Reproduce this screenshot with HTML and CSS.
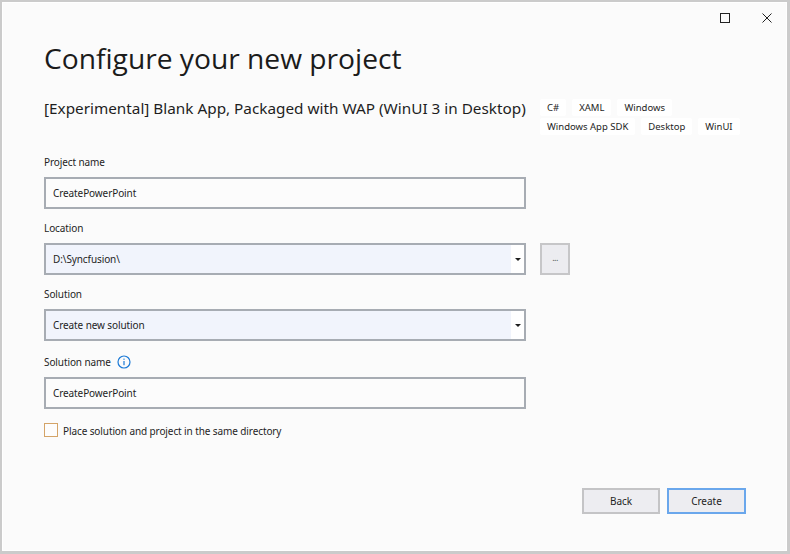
FILE: index.html
```html
<!DOCTYPE html>
<html>
<head>
<meta charset="utf-8">
<link rel="stylesheet" href="styles.css">
</head>
<body>
<div class="window">
  <div class="titlebar">
    <span class="tb-btn"><span class="max-icon"></span></span>
    <span class="tb-btn">
      <svg width="10" height="10" viewBox="0 0 10 10"><path d="M0.5 0.5 L9.5 9.5 M9.5 0.5 L0.5 9.5" stroke="#222" stroke-width="1" fill="none"/></svg>
    </span>
  </div>
  <div class="content">
    <h1 class="title">Configure your new project</h1>
    <div class="template-row">
      <div class="template-name">[Experimental] Blank App, Packaged with WAP (WinUI 3 in Desktop)</div>
      <div class="tags">
        <span class="tag">C#</span>
        <span class="tag">XAML</span>
        <span class="tag">Windows</span>
        <span class="tag">Windows App SDK</span>
        <span class="tag">Desktop</span>
        <span class="tag">WinUI</span>
      </div>
    </div>

    <div class="label first">Project name</div>
    <div class="textbox">CreatePowerPoint</div>

    <div class="label">Location</div>
    <div class="combo-row">
      <div class="combo">
        <span class="combo-text">D:\Syncfusion\</span>
        <span class="combo-arrow"><span class="arrow"></span></span>
      </div>
      <div class="browse">...</div>
    </div>

    <div class="label">Solution</div>
    <div class="combo">
      <span class="combo-text">Create new solution</span>
      <span class="combo-arrow"><span class="arrow"></span></span>
    </div>

    <div class="label with-info">Solution name
      <svg class="info" width="14" height="14" viewBox="0 0 14 14"><circle cx="7" cy="7" r="6" stroke="#1c7ad6" stroke-width="1.2" fill="none"/><rect x="6.4" y="6" width="1.2" height="4.2" fill="#1c7ad6"/><rect x="6.4" y="3.6" width="1.2" height="1.2" fill="#1c7ad6"/></svg>
    </div>
    <div class="textbox">CreatePowerPoint</div>

    <label class="check-row">
      <span class="checkbox"></span>
      <span class="check-label">Place solution and project in the same directory</span>
    </label>
  </div>
  <div class="footer">
    <div class="btn">Back</div>
    <div class="btn primary">Create</div>
  </div>
</div>
</body>
</html>
```
FILE: styles.css
```css
html, body {
  margin: 0;
  padding: 0;
}
body {
  background: #cbcbcb;
  width: 790px;
  height: 554px;
  overflow: hidden;
  font-family: "Noto Sans", "Open Sans", sans-serif;
  color: #1e1e1e;
}
.window {
  margin: 2px 3px 3px 2px;
  width: 783px;
  height: 547px;
  border: 1px solid #ffffff;
  background: #fbfbfb;
  display: flex;
  flex-direction: column;
  box-sizing: content-box;
}
.titlebar {
  display: flex;
  justify-content: flex-end;
  height: 32px;
  padding-right: 14px;
  gap: 32px;
  align-items: flex-start;
  padding-top: 10px;
  box-sizing: border-box;
}
.tb-btn {
  width: 10px;
  height: 10px;
  display: flex;
  align-items: center;
  justify-content: center;
}
.max-icon {
  width: 8px;
  height: 8px;
  border: 1px solid #222;
}
.content {
  padding-left: 41px;
  flex: 1;
}
.title {
  font-family: "Open Sans", "Noto Sans", sans-serif;
  font-weight: 400;
  font-size: 28.2px;
  line-height: 40px;
  margin: 3px 0 0 0;
  color: #1b1b1b;
}
.template-row {
  display: flex;
  align-items: flex-start;
  margin-top: 21px;
  gap: 14px;
}
.template-name {
  font-size: 15.3px;
  line-height: 22px;
  margin-top: -2px;
  width: 482px;
  white-space: nowrap;
}
.tags {
  display: flex;
  flex-wrap: wrap;
  width: 212px;
  gap: 2px 6px;
}
.tag {
  background: #ffffff;
  font-size: 9.5px;
  line-height: 17px;
  height: 17px;
  padding: 0 7px;
  border-radius: 2px;
  color: #1e1e1e;
}
.label {
  font-size: 10px;
  letter-spacing: -0.1px;
  line-height: 16px;
  margin-top: 11px;
  margin-bottom: 7px;
  display: flex;
  align-items: center;
}
.label.first {
  margin-top: 19px;
}
.label.with-info {
  margin-top: 13px;
}
.with-info .info {
  margin-left: 6px;
}
.textbox {
  width: 482px;
  height: 32px;
  box-sizing: border-box;
  border: 2px solid #a7acb3;
  background: #fcfcfc;
  font-size: 10px;
  letter-spacing: -0.1px;
  line-height: 28px;
  padding-left: 7px;
}
.combo-row {
  display: flex;
  gap: 14px;
}
.combo {
  width: 482px;
  height: 32px;
  box-sizing: border-box;
  border: 2px solid #a7acb3;
  background: #f1f4fc;
  display: flex;
  font-size: 10px;
  letter-spacing: -0.1px;
}
.combo-text {
  flex: 1;
  line-height: 28px;
  padding-left: 7px;
}
.combo-arrow {
  width: 13px;
  background: #ffffff;
  display: flex;
  align-items: center;
  justify-content: center;
}
.arrow {
  width: 0;
  height: 0;
  border-left: 3px solid transparent;
  border-right: 3px solid transparent;
  border-top: 3px solid #1e1e1e;
}
.browse {
  width: 30px;
  height: 32px;
  box-sizing: border-box;
  border: 2px solid #c6c6c8;
  background: #ececf0;
  font-size: 9px;
  color: #555;
  text-align: center;
  line-height: 26px;
  letter-spacing: -0.5px;
}
.check-row {
  display: flex;
  align-items: center;
  margin-top: 12px;
}
.checkbox {
  width: 14px;
  height: 14px;
  box-sizing: border-box;
  border: 1.5px solid #d4a468;
  background: #fdfdfd;
}
.check-label {
  font-size: 10px;
  letter-spacing: -0.1px;
  margin-left: 5px;
  line-height: 16px;
  margin-top: 2px;
}
.footer {
  display: flex;
  justify-content: flex-end;
  gap: 7px;
  padding-right: 40px;
  padding-bottom: 36px;
}
.btn {
  width: 78px;
  height: 26px;
  box-sizing: border-box;
  border: 2px solid #c4c4c6;
  background: #ededf1;
  font-size: 10px;
  text-align: center;
  line-height: 22px;
}
.btn.primary {
  width: 79px;
  border-color: #6aa7ec;
}
```
